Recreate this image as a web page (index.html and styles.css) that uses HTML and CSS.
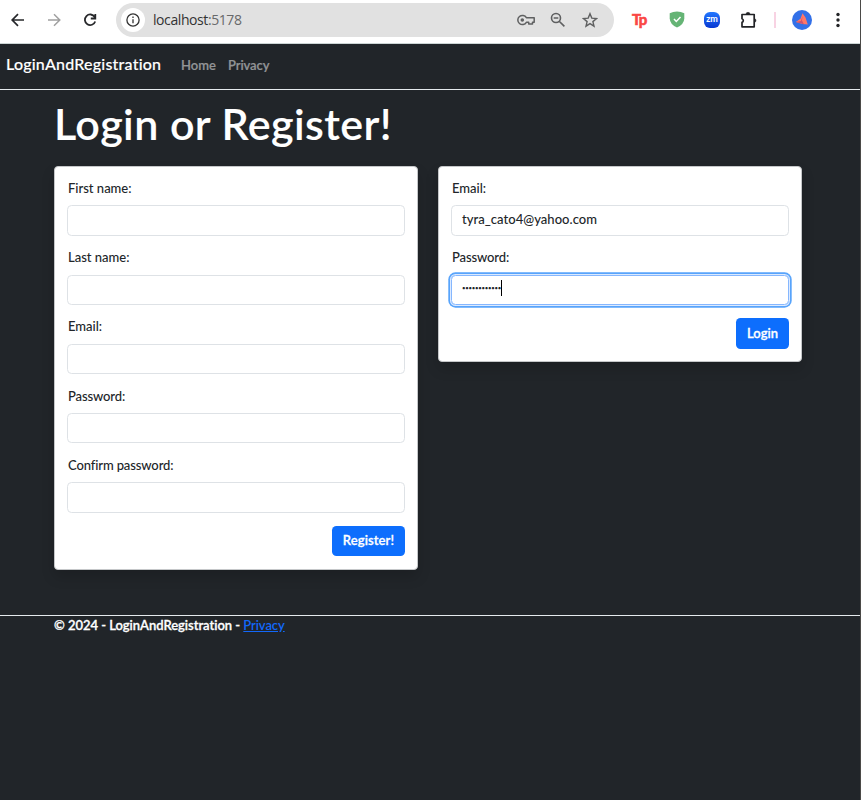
FILE: index.html
```html
<!DOCTYPE html>
<html lang="en">
<head>
<meta charset="utf-8">
<title>LoginAndRegistration</title>
<link rel="stylesheet" href="styles.css">
</head>
<body>
<div class="toolbar">
  <svg class="icon back" width="20" height="20" viewBox="0 0 20 20"><path d="M16 10H4.800M10 4.200L4.200 10l5.800 5.800" fill="none" stroke="#27282b" stroke-width="1.700"/></svg>
  <svg class="icon forward" width="20" height="20" viewBox="0 0 20 20"><path d="M4 10h11.200M10 4.200l5.800 5.800-5.800 5.800" fill="none" stroke="#a0a0a0" stroke-width="1.500"/></svg>
  <svg class="icon reload" width="20" height="20" viewBox="0 0 20 20"><path d="M14.700 7A5.300 5.300 0 1 0 15.200 11.500M15.300 4v4.500h-4.500" fill="none" stroke="#27282b" stroke-width="1.800"/></svg>
  <div class="address">
    <span class="site-info"><svg width="14" height="14" viewBox="0 0 14 14"><circle cx="7" cy="7" r="6.100" fill="none" stroke="#333" stroke-width="1.300"/><path d="M7 6.200v4M7 3.500v1.500" stroke="#333" stroke-width="1.300"/></svg></span>
    <span class="url">localhost<span class="port">:5178</span></span>
    <svg class="key" width="18" height="12" viewBox="0 0 18 12" fill="none" stroke="#5f6061" stroke-width="1.500"><path d="M9.400 3.700A4.600 4.600 0 1 0 9.400 8.300H11.700V10H15.500V8.300H17.200V3.700Z" stroke-linejoin="round"/><circle cx="5.300" cy="6" r="1.800" fill="#5f6061" stroke="none"/></svg>
    <svg class="lens" width="16" height="16" viewBox="0 0 16 16" fill="none" stroke="#5f6061" stroke-width="1.600"><circle cx="6" cy="6" r="4.500"/><path d="M9.200 9.200l5.200 5.200M3.700 6h4.600"/></svg>
    <svg class="star" width="16" height="16" viewBox="0 0 16 16"><path d="M8 1.700l1.800 4.400 4.700.4-3.600 3.100 1.100 4.600L8 11.700l-4 2.500 1.100-4.600-3.600-3.100 4.700-.4Z" fill="none" stroke="#5f6061" stroke-width="1.400"/></svg>
  </div>
  <span class="tp">Tp</span>
  <svg class="shield" width="16" height="17" viewBox="0 0 16 17"><path d="M8 .5Q12 .7 15.300 2.200V7.500Q15 13.500 8 16.500Q1 13.500.7 7.500V2.200Q4 .7 8 .5Z" fill="#65b475"/><path d="M5 8l2.300 2.500L11.500 6" fill="none" stroke="#fff" stroke-width="1.500"/></svg>
  <span class="zm">zm</span>
  <svg class="puzzle" width="18" height="18" viewBox="0 0 18 18"><path d="M2 3.500h12.200v12.300H2v-4.400a1.900 1.900 0 0 0 0-3.600Z" fill="none" stroke="#222326" stroke-width="1.700" stroke-linejoin="round"/><path d="M6 3.300a2 2 0 0 1 4 0ZM14.500 7.500a2.100 2.100 0 0 1 0 4Z" fill="#222326" stroke="#222326" stroke-width=".5"/></svg>
  <span class="divider"></span>
  <svg class="avatar" width="20" height="20" viewBox="0 0 20 20"><circle cx="10" cy="10" r="10" fill="#3270e8"/><path d="M10.500 3.200L13.500 7.500 15.800 14.500 10.500 14 3.800 12 8.500 8.800Z" fill="#ff7767"/><path d="M10.500 6L10 10.500 12 14.500l-3-1.300L4 12l5-1Z" fill="#c95373"/></svg>
  <svg class="dots" width="4" height="16" viewBox="0 0 4 16" fill="#222326"><circle cx="2" cy="2.500" r="1.700"/><circle cx="2" cy="8" r="1.700"/><circle cx="2" cy="13.500" r="1.700"/></svg>
</div>
<header class="navbar">
  <a class="brand">LoginAndRegistration</a>
  <a class="nav-link home">Home</a>
  <a class="nav-link privacy">Privacy</a>
</header>
<main class="container">
  <h1>Login or Register!</h1>
  <div class="row">
    <form class="card">
      <label>First name:</label><div class="input"></div>
      <label>Last name:</label><div class="input"></div>
      <label>Email:</label><div class="input"></div>
      <label class="l-password">Password:</label><div class="input"></div>
      <label class="l-confirm">Confirm password:</label><div class="input"></div>
      <div class="actions"><button type="button" class="register">Register!</button></div>
    </form>
    <form class="card">
      <label>Email:</label><div class="input"><span class="value">tyra_cato4@yahoo.com</span></div>
      <label class="l-password">Password:</label><div class="input focused"><span class="mask">••••••••••••</span><span class="caret"></span></div>
      <div class="actions"><button type="button" class="login">Login</button></div>
    </form>
  </div>
</main>
<footer><span class="copyright">© 2024 - LoginAndRegistration - </span><a class="foot-link">Privacy</a></footer>
</body>
</html>
```
FILE: styles.css
```css
* { box-sizing: border-box; }
body { margin: 0; height: 800px; overflow: hidden; background: #212529; border-right: 1px solid #4b4a48; font: 500 13px/20px Lato, "Open Sans", sans-serif; color: #212529; }
svg { display: block; flex: none; }
.toolbar { height: 44px; padding: 0 0 4px 8px; display: flex; align-items: center; background: #fff; border-bottom: 1px solid #ccd5d5; }
.forward, .reload { margin-left: 16px; }
.address { margin-left: 16px; width: 498px; height: 34px; border-radius: 17px; background: #e1e1e1; display: flex; align-items: center; flex: none; }
.site-info { width: 24px; height: 24px; margin-left: 5px; border-radius: 50%; background: #fff; display: grid; place-items: center; }
.url { width: 364px; margin-left: 8px; font: 14px/20px "Open Sans", sans-serif; letter-spacing: -.42px; color: #333; }
.port { color: #68696a; }
.lens { margin-left: 15px; }
.star { margin-left: 16px; }
.tp { margin-left: 18px; width: 16px; height: 20px; color: #fa4744; font: 900 15px/19px Lato, sans-serif; letter-spacing: -.8px; -webkit-text-stroke: .5px #fa4744; }
.shield { margin-left: 21px; }
.zm { margin-left: 19px; width: 16px; height: 16px; border-radius: 6px; background: linear-gradient(#2378ff, #0737d1); color: #fff; font: 700 9px/14px Lato, sans-serif; text-align: center; }
.puzzle { margin-left: 20px; }
.divider { width: 2px; height: 16px; margin-left: 16px; background: #f8d3e3; }
.avatar { margin-left: 16px; }
.dots { margin-left: 24px; }
.navbar { height: 46px; padding: 0 6px 6px; border-bottom: 1px solid #e5eaed; display: flex; align-items: center; }
.brand { width: 175px; font-size: 16px; color: #fff; letter-spacing: .21px; -webkit-text-stroke: .15px; }
.nav-link { width: 47px; color: #929496; font-weight: 600; padding-top: 3px; -webkit-text-stroke: .2px; }
.privacy { letter-spacing: -.1px; }
.container { width: 748px; margin: 0 0 0 54px; }
h1 { margin: 0 0 16px; height: 60px; padding-top: 9px; font-size: 43px; line-height: 50px; font-weight: 600; letter-spacing: .43px; color: #fff; white-space: nowrap; -webkit-text-stroke: .1px; }
.row { display: flex; gap: 20px; align-items: flex-start; }
.card { width: 364px; padding: 11px 12px 12.500px; border: 1px solid #c5c7c9; border-radius: 4px; background: #fff; box-shadow: 0 7px 13px rgba(0, 0, 0, .15); }
label { display: block; height: 20px; margin-bottom: 7.400px; padding-left: 1px; white-space: nowrap; }
.l-password, .l-confirm { letter-spacing: -.12px; }
.input { height: 30.500px; margin-bottom: 11.300px; padding: 0 10px 3px; border: 1px solid #dee2e6; border-radius: 4.500px; display: flex; align-items: center; }
.value { letter-spacing: .04px; }
.focused { border-color: #86b7fe; box-shadow: 0 0 0 1px #dceaff, 0 0 0 2.700px #58a4fb; }
.mask { font-size: 6px; letter-spacing: -.24px; white-space: nowrap; }
.caret { width: 1px; height: 16px; background: #000; }
.actions { display: flex; justify-content: flex-end; padding-top: 1.900px; }
button { height: 30.500px; padding: 0 0 2px; border: 0; border-radius: 4.500px; background: #0d6efd; color: #fff; font: 600 13px/20px Lato, sans-serif; -webkit-text-stroke: .3px; }
.register { width: 73px; letter-spacing: .1px; }
.login { width: 53px; }
footer { margin-top: 45px; height: 30px; padding-left: 54px; border-top: 1px solid #e5eaed; color: #fff; font-weight: 600; line-height: 18px; letter-spacing: -.03px; white-space: pre; -webkit-text-stroke: .3px; }
.foot-link { color: #1268fa; text-decoration: underline; letter-spacing: -.1px; -webkit-text-stroke: 0; }
```
